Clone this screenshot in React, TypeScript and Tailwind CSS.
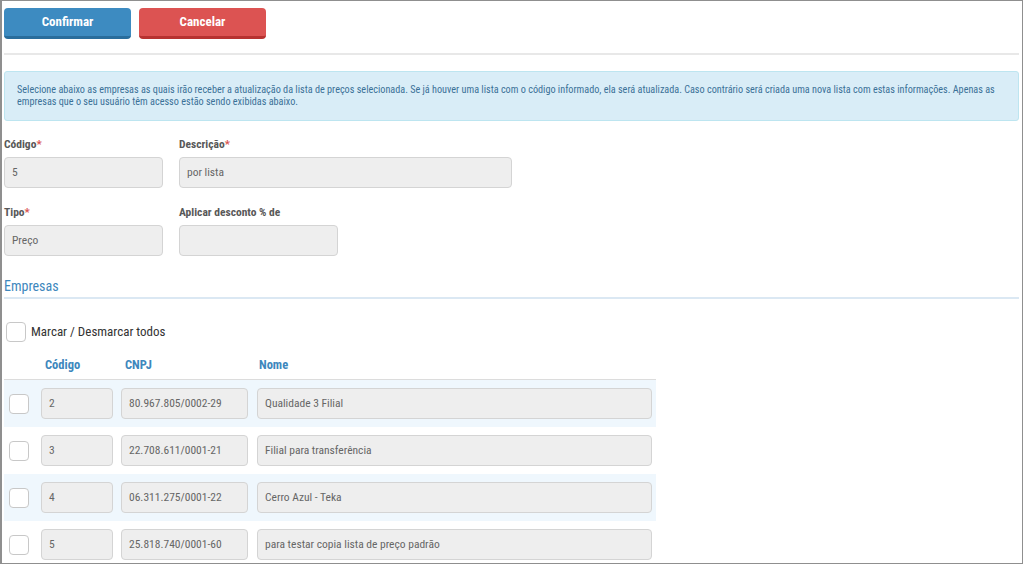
import React from 'react';

const rows = [
  { codigo: '2', cnpj: '80.967.805/0002-29', nome: 'Qualidade 3 Filial' },
  { codigo: '3', cnpj: '22.708.611/0001-21', nome: 'Filial para transferência' },
  { codigo: '4', cnpj: '06.311.275/0001-22', nome: 'Cerro Azul - Teka' },
  { codigo: '5', cnpj: '25.818.740/0001-60', nome: 'para testar copia lista de preço padrão' },
];

const Field = ({ value, className }: { value: string; className: string }) => (
  <div
    className={`h-[31px] rounded-[4px] border border-[#d4d4d4] bg-[#eeeeee] px-[7px] flex items-center text-[11.5px] text-[#666] ${className}`}
  >
    {value}
  </div>
);

const Label = ({ text, required }: { text: string; required?: boolean }) => (
  <div className="text-[11.5px] font-bold text-[#585858] leading-none h-[12px]">
    {text}
    {required && <span className="text-[#d9534f]">*</span>}
  </div>
);

const Box = () => (
  <div className="w-[20px] h-[20px] rounded-[4px] border border-[#c8c8c8] bg-white shrink-0" />
);

export default function App() {
  return (
    <div
      className="w-[1024px] h-[565px] overflow-hidden bg-white"
      style={{ fontFamily: '"Liberation Sans Narrow", "Roboto Condensed", Roboto, sans-serif' }}
    >
      <div className="w-[1023px] h-[564px] border border-[#8f8f8f] border-l-2 pl-[2px] pr-[3px] overflow-hidden">
        {/* actions */}
        <div className="flex gap-[8px] pt-[7px]">
          <button className="w-[127px] h-[31px] rounded-[4px] bg-[#3d8bc1] border-b-[3px] border-[#296d9c] text-white text-[13px] font-bold">
            Confirmar
          </button>
          <button className="w-[127px] h-[31px] rounded-[4px] bg-[#dc5352] border-b-[3px] border-[#b73230] text-white text-[13px] font-bold">
            Cancelar
          </button>
        </div>
        <div className="mt-[14px] h-[2px] bg-[#e8e8e8]" />

        {/* info */}
        <div className="mt-[16px] h-[50px] rounded-[3px] border border-[#bde5f0] bg-[#d9edf7] px-[12px] pt-[12px] text-[10.2px] leading-[12px] text-[#3b7197]">
          Selecione abaixo as empresas as quais irão receber a atualização da lista de preços selecionada. Se já houver uma lista com o código informado, ela será atualizada. Caso contrário será criada uma nova lista com estas informações. Apenas as empresas que o seu usuário têm acesso estão sendo exibidas abaixo.
        </div>

        {/* form */}
        <div className="mt-[18px] flex gap-[16px]">
          <div className="flex flex-col gap-[6px]">
            <Label text="Código" required />
            <Field value="5" className="w-[159px]" />
          </div>
          <div className="flex flex-col gap-[6px]">
            <Label text="Descrição" required />
            <Field value="por lista" className="w-[333px]" />
          </div>
        </div>
        <div className="mt-[19px] flex gap-[16px]">
          <div className="flex flex-col gap-[6px]">
            <Label text="Tipo" required />
            <Field value="Preço" className="w-[159px]" />
          </div>
          <div className="flex flex-col gap-[6px]">
            <Label text="Aplicar desconto % de" />
            <Field value="" className="w-[159px]" />
          </div>
        </div>

        {/* empresas */}
        <div className="mt-[22px] text-[14px] text-[#3d87bd] leading-[16px]">Empresas</div>
        <div className="mt-[3px] h-[2px] bg-[#dbe8f3]" />

        <div className="mt-[23px] flex items-center gap-[5px] pl-[2px]">
          <Box />
          <span className="text-[13px] text-[#333]">Marcar / Desmarcar todos</span>
        </div>

        <div className="w-[652px] mt-[10px]">
          <div className="flex h-[27px] items-center text-[12.5px] font-bold text-[#3d87bd]">
            <span className="ml-[41px] w-[80px]">Código</span>
            <span className="w-[134px]">CNPJ</span>
            <span>Nome</span>
          </div>
          <div className="border-t border-[#dcdcdc]">
            {rows.map((r, i) => (
              <div
                key={r.codigo}
                className={`h-[47px] flex items-center pl-[5px] gap-[8px] ${i % 2 === 0 ? 'bg-[#eff7fd]' : 'bg-white'}`}
              >
                <Box />
                <Field value={r.codigo} className="w-[72px] ml-[4px]" />
                <Field value={r.cnpj} className="w-[127px]" />
                <Field value={r.nome} className="w-[395px] ml-[1px]" />
              </div>
            ))}
          </div>
        </div>
      </div>
    </div>
  );
}
